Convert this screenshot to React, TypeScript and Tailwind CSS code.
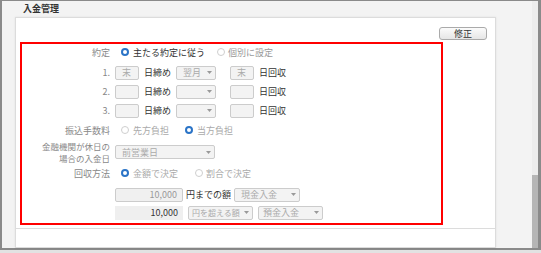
import React from "react";

const font = { fontFamily: '"Noto Sans CJK JP", "Noto Sans", sans-serif' };

function Radio({ checked = false }: { checked?: boolean }) {
  return checked ? (
    <span className="inline-block w-[8px] h-[8px] rounded-full border-[2px] border-[#2b74c7] bg-white shrink-0" />
  ) : (
    <span className="inline-block w-[8px] h-[8px] rounded-full border border-[#cfcfcf] bg-white shrink-0" />
  );
}

function Arrow() {
  return (
    <svg width="5" height="3" viewBox="0 0 5 3" className="shrink-0">
      <path d="M0 0 L5 0 L2.5 3 Z" fill="#999" />
    </svg>
  );
}

function Select({ value = "", width, pad = "pl-[6px]", size = "" }: { value?: string; width: string; pad?: string; size?: string }) {
  return (
    <div
      className={`${width} h-[14px] flex items-center justify-between ${pad} pr-[3px] border border-[#cccccc] bg-[#f3f3f3] rounded-[2px] text-[#aaa] overflow-hidden`}
    >
      <span className={`leading-none whitespace-nowrap ${size}`}>{value}</span>
      <Arrow />
    </div>
  );
}

function Box({ value = "" }: { value?: string }) {
  return (
    <div className="w-[24px] h-[14px] flex items-center pl-[6px] border border-[#cccccc] bg-[#f3f3f3] rounded-[2px] text-[#aaa]">
      <span className="leading-none">{value}</span>
    </div>
  );
}

function Row({ label, top, children, h = "h-[15px]" }: { label: React.ReactNode; top: string; children?: React.ReactNode; h?: string }) {
  return (
    <div className={`flex items-center ${h} ${top}`}>
      <div className="w-[88px] text-right text-[#888] whitespace-nowrap">{label}</div>
      <div className="ml-[5px] flex items-center">{children}</div>
    </div>
  );
}

function ClosingRow({ n, top, day = "", month = "", pay = "" }: { n: string; top: string; day?: string; month?: string; pay?: string }) {
  return (
    <Row label={n} top={top}>
      <Box value={day} />
      <span className="ml-[5px] text-[#333]">日締め</span>
      <div className="ml-[5px]">
        <Select value={month} width="w-[40px]" />
      </div>
      <div className="ml-[14px]">
        <Box value={pay} />
      </div>
      <span className="ml-[5px] text-[#333]">日回収</span>
    </Row>
  );
}

export default function App() {
  return (
    <div className="w-[541px] h-[253px] bg-[#e2e2e2] text-[9px]" style={font}>
      <div className="h-[250px] flex border-l-2 border-t border-b-2 border-r-[3px] border-[#8a8a8a]">
        <div className="flex-1 bg-[#f3f3f3] flex flex-col">
          <div className="h-[16px] pl-[21px] flex items-center font-bold text-[#333]">入金管理</div>
          <div className="ml-[13px] w-[481px] flex-1 bg-white border border-[#dcdcdc] shadow-[0_0_2px_rgba(0,0,0,0.08)] flex flex-col">
            <div className="flex justify-end pr-[8px] pt-[9px]">
              <button
                type="button"
                className="w-[48px] h-[13px] rounded-[3px] border border-[#aaa] bg-gradient-to-b from-[#fbfbfb] to-[#e6e6e6] text-[#333] leading-none flex items-center justify-center"
              >
                修正
              </button>
            </div>
            <div className="ml-[4px] mt-[2px] w-[423px] h-[183px] border-2 border-[#ff0000] flex flex-col">
              <Row label="約定" top="mt-[1px]">
                <div className="ml-[6px]"><Radio checked /></div>
                <span className="ml-[4px] text-[#333]">主たる約定に従う</span>
                <div className="ml-[12px]"><Radio /></div>
                <span className="ml-[3px] text-[#999]">個別に設定</span>
              </Row>
              <ClosingRow n="1." top="mt-[5px]" day="末" month="翌月" pay="末" />
              <ClosingRow n="2." top="mt-[4px]" />
              <ClosingRow n="3." top="mt-[4px]" />
              <Row label="振込手数料" top="mt-[5px]">
                <div className="ml-[6px]"><Radio /></div>
                <span className="ml-[4px] text-[#aaa]">先方負担</span>
                <div className="ml-[16px]"><Radio checked /></div>
                <span className="ml-[4px] text-[#aaa]">当方負担</span>
              </Row>
              <Row
                label={
                  <div className="text-[8.5px] leading-[12px]">
                    金融機関が休日の
                    <br />
                    場合の入金日
                  </div>
                }
                top="mt-[2px]"
                h="h-[24px]"
              >
                <Select value="前営業日" width="w-[100px]" />
              </Row>
              <Row label="回収方法" top="mt-[2px]">
                <div className="ml-[6px]"><Radio checked /></div>
                <span className="ml-[4px] text-[#aaa]">金額で決定</span>
                <div className="ml-[17px]"><Radio /></div>
                <span className="ml-[3px] text-[#aaa]">割合で決定</span>
              </Row>
              <Row label="" top="mt-[6px]">
                <div className="w-[68px] h-[14px] flex items-center justify-end pr-[5px] border border-[#cccccc] bg-[#f0f0f0] rounded-[2px] text-[#999]">
                  10,000
                </div>
                <span className="ml-[3px] text-[#333]">円までの額</span>
                <div className="ml-[3px]">
                  <Select value="現金入金" width="w-[66px]" />
                </div>
              </Row>
              <Row label="" top="mt-[3px]">
                <div className="w-[68px] h-[14px] flex items-center justify-end pr-[5px] bg-[#efefef] text-[#333]">
                  10,000
                </div>
                <div className="ml-[5px]">
                  <Select value="円を超える額" width="w-[65px]" pad="pl-[3px]" size="text-[8px]" />
                </div>
                <div className="ml-[5px]">
                  <Select value="預金入金" width="w-[65px]" pad="pl-[4px]" />
                </div>
              </Row>
            </div>
            <div className="mt-[3px] border-t border-[#dcdcdc]" />
          </div>
        </div>
        <div className="w-[6px] bg-[#ececec] flex flex-col">
          <div className="h-[174px]" />
          <div className="flex-1 bg-[#b5b5b5]" />
        </div>
      </div>
    </div>
  );
}
